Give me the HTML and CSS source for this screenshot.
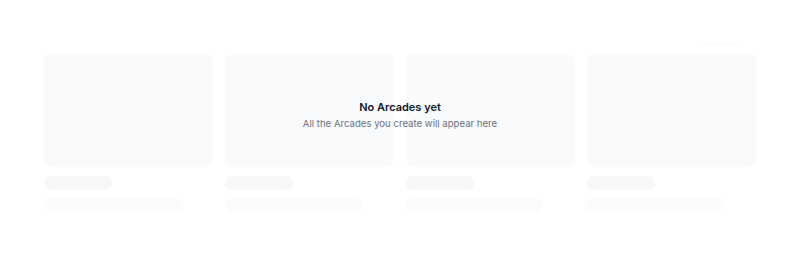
FILE: index.html
```html
<!DOCTYPE html>
<html>
<head>
<meta charset="utf-8">
<link rel="stylesheet" href="styles.css">
</head>
<body>
<div class="page">
  <div class="header"><div class="header-pill"></div></div>
  <div class="board">
    <div class="grid">
      <div class="item"><div class="thumb"></div><div class="pill short"></div><div class="pill long"></div></div>
      <div class="item"><div class="thumb"></div><div class="pill short"></div><div class="pill long"></div></div>
      <div class="item"><div class="thumb"></div><div class="pill short"></div><div class="pill long"></div></div>
      <div class="item"><div class="thumb"></div><div class="pill short"></div><div class="pill long"></div></div>
    </div>
    <div class="empty">
      <div class="title">No Arcades yet</div>
      <div class="subtitle">All the Arcades you create will appear here</div>
    </div>
  </div>
</div>
</body>
</html>
```

FILE: styles.css
```css
html, body {
  margin: 0;
  padding: 0;
  background: #ffffff;
  font-family: Inter, "Noto Sans", "Liberation Sans", sans-serif;
}
.page {
  width: 800px;
  height: 255px;
  box-sizing: border-box;
  padding: 42px 44px 0 44px;
}
.header {
  height: 4px;
  display: flex;
  justify-content: flex-end;
  margin-bottom: 8px;
}
.header-pill {
  width: 34px;
  height: 4px;
  margin-right: 19px;
  border-radius: 2px;
  background: #fbfbfc;
}
.board {
  position: relative;
}
.grid {
  display: grid;
  grid-template-columns: repeat(4, 169px);
  column-gap: 12px;
}
.item {
  display: flex;
  flex-direction: column;
}
.thumb {
  height: 113px;
  border-radius: 8px;
  background: #f9fafb;
}
.pill {
  height: 14px;
  border-radius: 7px;
}
.pill.short {
  width: 68px;
  margin-top: 9px;
  background: #f6f7f9;
}
.pill.long {
  width: 137px;
  margin-top: 8px;
  background: #fbfbfc;
}
.empty {
  position: absolute;
  left: 0;
  right: 0;
  top: 46px;
  text-align: center;
}
.title {
  font-size: 11px;
  font-weight: 600;
  color: #111827;
  line-height: 15px;
}
.subtitle {
  margin-top: 3px;
  font-size: 9.6px;
  color: #6b7280;
  line-height: 12px;
}
```
